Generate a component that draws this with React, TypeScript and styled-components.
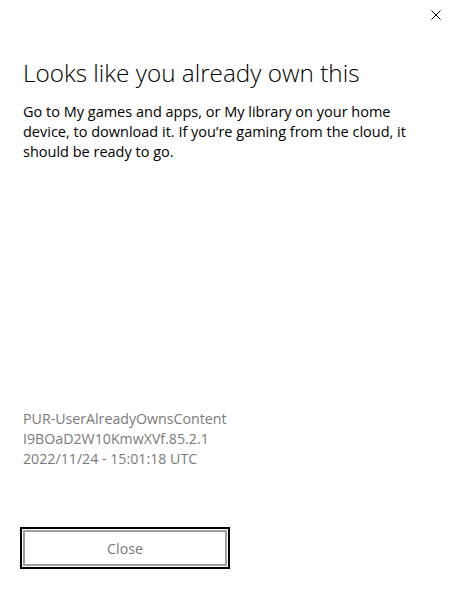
import React from 'react';
import styled, { createGlobalStyle } from 'styled-components';

const GlobalStyle = createGlobalStyle`
    html, body {
        margin: 0;
        padding: 0;
        background: #ffffff;
    }
    body {
        font-family: "Open Sans", "Noto Sans", sans-serif;
    }
`;

export default function App() {
    return (
        <>
            <GlobalStyle />
            <Dialog>
                <TopBar>
                    <DismissButton aria-label="Close">
                        <svg width="10" height="10" viewBox="0 0 10 10">
                            <path d="M0.5 0.5 L9.5 9.5 M9.5 0.5 L0.5 9.5" stroke="#000" strokeWidth="1" fill="none" />
                        </svg>
                    </DismissButton>
                </TopBar>
                <Content>
                    <Title>Looks like you already own this</Title>
                    <Message>
                        Go to My games and apps, or My library on your home device, to download it. If you’re gaming from the cloud, it should be ready to go.
                    </Message>
                </Content>
                <Spacer />
                <Details>
                    <DetailLine>PUR-UserAlreadyOwnsContent</DetailLine>
                    <DetailLine>I9BOaD2W10KmwXVf.85.2.1</DetailLine>
                    <DetailLine>2022/11/24 - 15:01:18 UTC</DetailLine>
                </Details>
                <Footer>
                    <CloseButton>Close</CloseButton>
                </Footer>
            </Dialog>
        </>
    );
}

const Dialog = styled.div`
    display: flex;
    flex-direction: column;
    height: 100vh;
    box-sizing: border-box;
    padding: 0 0 20px 0;
`;

const TopBar = styled.div`
    display: flex;
    justify-content: flex-end;
    padding: 10px 16px 0 0;
    height: 56px;
    box-sizing: border-box;
`;

const DismissButton = styled.button`
    width: 10px;
    height: 10px;
    padding: 0;
    border: none;
    background: none;
    display: flex;
    cursor: pointer;
`;

const Content = styled.div`
    display: flex;
    flex-direction: column;
    gap: 12px;
    padding: 0 23px;
`;

const Title = styled.h1`
    margin: 0;
    font-weight: 300;
    font-size: 24.3px;
    line-height: 34px;
    color: #000;
`;

const Message = styled.p`
    margin: 0;
    font-size: 14.5px;
    line-height: 20px;
    color: #000;
`;

const Spacer = styled.div`
    flex: 1;
`;

const Details = styled.div`
    display: flex;
    flex-direction: column;
    padding: 0 23px;
    margin-bottom: 58px;
`;

const DetailLine = styled.div`
    font-size: 14.2px;
    line-height: 20px;
    color: #7a7a7a;
`;

const Footer = styled.div`
    padding: 0 20px;
`;

const CloseButton = styled.button`
    width: 210px;
    height: 42px;
    box-sizing: border-box;
    border: 2px solid #000;
    box-shadow: inset 0 0 0 1px #fff, inset 0 0 0 3px #a0a0a0;
    background: #fff;
    font-family: "Open Sans", "Noto Sans", sans-serif;
    font-size: 14.2px;
    color: #7a7a7a;
    cursor: pointer;
`;
